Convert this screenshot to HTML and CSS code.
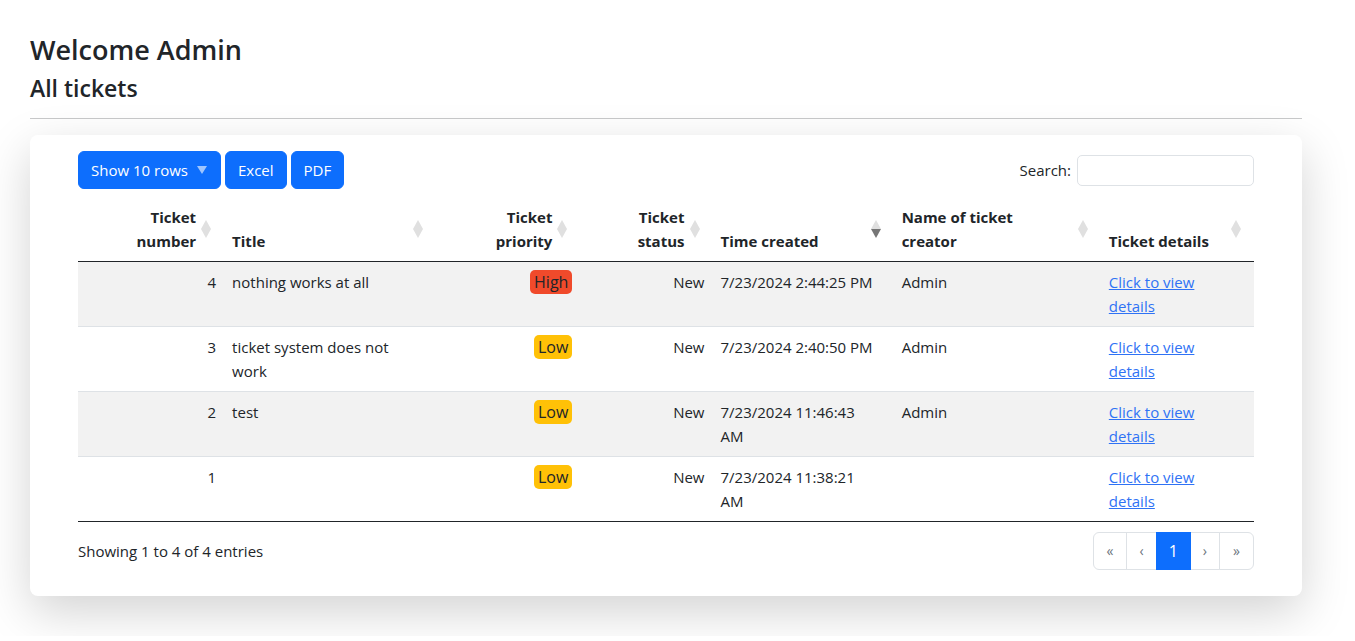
FILE: index.html
```html
<!DOCTYPE html>
<html lang="en">
<head>
<meta charset="utf-8">
<title>All tickets</title>
<link rel="stylesheet" href="styles.css">
</head>
<body>
<div class="page">
  <h3 class="title">Welcome Admin</h3>
  <h4 class="subtitle">All tickets</h4>
  <hr class="rule">
  <section class="card">
    <div class="toolbar">
      <div class="btn-group">
        <button class="btn btn-drop" type="button">Show 10 rows <span class="caret"></span></button>
        <button class="btn" type="button">Excel</button>
        <button class="btn" type="button">PDF</button>
      </div>
      <label class="search">Search:<input class="search-input" type="search"></label>
    </div>
    <table class="tickets">
      <colgroup>
        <col class="c-num"><col class="c-title"><col class="c-prio"><col class="c-status"><col class="c-time"><col class="c-name"><col class="c-details">
      </colgroup>
      <thead>
        <tr>
          <th class="sorting r">Ticket<br>number</th>
          <th class="sorting">Title</th>
          <th class="sorting r">Ticket<br>priority</th>
          <th class="sorting r">Ticket<br>status</th>
          <th class="sorting sorting-desc">Time created</th>
          <th class="sorting">Name of ticket<br>creator</th>
          <th class="sorting">Ticket details</th>
        </tr>
      </thead>
      <tbody>
        <tr class="odd">
          <td class="r">4</td>
          <td>nothing works at all</td>
          <td class="r"><span class="badge high">High</span></td>
          <td class="r">New</td>
          <td class="time">7/23/2024 2:44:25 PM</td>
          <td>Admin</td>
          <td><a class="link" href="#">Click to view<br>details</a></td>
        </tr>
        <tr>
          <td class="r">3</td>
          <td>ticket system does not<br>work</td>
          <td class="r"><span class="badge low">Low</span></td>
          <td class="r">New</td>
          <td class="time">7/23/2024 2:40:50 PM</td>
          <td>Admin</td>
          <td><a class="link" href="#">Click to view<br>details</a></td>
        </tr>
        <tr class="odd">
          <td class="r">2</td>
          <td>test</td>
          <td class="r"><span class="badge low">Low</span></td>
          <td class="r">New</td>
          <td class="time">7/23/2024 11:46:43<br>AM</td>
          <td>Admin</td>
          <td><a class="link" href="#">Click to view<br>details</a></td>
        </tr>
        <tr>
          <td class="r">1</td>
          <td></td>
          <td class="r"><span class="badge low">Low</span></td>
          <td class="r">New</td>
          <td class="time">7/23/2024 11:38:21<br>AM</td>
          <td></td>
          <td><a class="link" href="#">Click to view<br>details</a></td>
        </tr>
      </tbody>
    </table>
    <div class="footer">
      <div class="info">Showing 1 to 4 of 4 entries</div>
      <ul class="pagination">
        <li class="page-item disabled first"><span class="page-link">&laquo;</span></li>
        <li class="page-item disabled"><span class="page-link">&lsaquo;</span></li>
        <li class="page-item active"><span class="page-link">1</span></li>
        <li class="page-item disabled"><span class="page-link">&rsaquo;</span></li>
        <li class="page-item disabled last"><span class="page-link">&raquo;</span></li>
      </ul>
    </div>
  </section>
</div>
</body>
</html>
```
FILE: styles.css
```css
* { box-sizing: border-box; }
html, body { margin: 0; padding: 0; background: #fff; }
body {
  font-family: "Open Sans", "Noto Sans", "Liberation Sans", sans-serif;
  font-size: 15px;
  line-height: 24px;
  color: #212529;
}
.page {
  padding: 34px 53px 40px 30px;
}
.title {
  margin: 0 0 8px;
  font-size: 27px;
  line-height: 32px;
  font-weight: 600;
}
.subtitle {
  margin: 0 0 8px;
  font-size: 23px;
  line-height: 28px;
  font-weight: 600;
}
.rule {
  margin: 16px 0 16px;
  border: 0;
  border-top: 1px solid #c8c9ca;
  height: 0;
}
.card {
  background: #fff;
  border-radius: 8px;
  box-shadow: 0 16px 48px rgba(0, 0, 0, 0.175);
  padding: 16px 48px 26px 48px;
}
.toolbar {
  display: flex;
  justify-content: space-between;
  align-items: center;
  margin-bottom: 8px;
}
.btn-group { display: flex; gap: 4px; }
.btn {
  font: inherit;
  color: #fff;
  background: #0d6efd;
  border: 1px solid #0d6efd;
  border-radius: 6px;
  padding: 6px 12px;
  line-height: 24px;
  height: 38px;
  display: inline-flex;
  align-items: center;
}
.btn-drop { padding-right: 13px; }
.caret {
  display: inline-block;
  width: 0; height: 0;
  margin-left: 9px;
  border-left: 5px solid transparent;
  border-right: 5px solid transparent;
  border-top: 8px solid rgba(255, 255, 255, 0.6);
}
.search {
  display: flex;
  align-items: center;
  gap: 6px;
}
.search-input {
  width: 177px;
  height: 31px;
  border: 1px solid #dee2e6;
  border-radius: 5px;
  font: inherit;
  padding: 2px 8px;
}
.tickets {
  width: 100%;
  table-layout: fixed;
  border-collapse: collapse;
  border-bottom: 1px solid #212529;
}
.c-num { width: 146px; }
.c-title { width: 212px; }
.c-prio { width: 144px; }
.c-status { width: 132px; }
.c-time { width: 181px; }
.c-name { width: 207px; }
.c-details { width: 153px; }
.tickets th {
  position: relative;
  font-weight: 700;
  text-align: left;
  vertical-align: bottom;
  padding: 8px 28px 8px 8px;
  border-bottom: 1px solid #212529;
}
.tickets td {
  padding: 8px;
  vertical-align: top;
  border-bottom: 1px solid #dee2e6;
}
.tickets tbody tr:last-child td { border-bottom: 0; }
.tickets .r { text-align: right; }
.tickets tr.odd td { background: #f2f2f2; }
.time { white-space: nowrap; }
.sorting::before,
.sorting::after {
  content: "";
  position: absolute;
  right: 13px;
  top: 50%;
  width: 0; height: 0;
  border-left: 5px solid transparent;
  border-right: 5px solid transparent;
}
.sorting::before {
  margin-top: -9px;
  border-bottom: 9px solid #e0e0e0;
}
.sorting::after {
  margin-top: 0;
  border-top: 9px solid #e0e0e0;
}
.sorting-desc::after { border-top-color: #767676; }
.badge {
  display: inline-block;
  padding: 0 4px;
  border-radius: 5px;
  font-size: 16px;
  color: #212529;
}
.badge.high { background: #f04a2b; }
.badge.low { background: #ffc107; }
.link { color: #2f72f5; text-decoration: underline; }
.footer {
  display: flex;
  justify-content: space-between;
  align-items: center;
  margin-top: 10px;
}
.pagination {
  display: flex;
  list-style: none;
  margin: 0;
  padding: 0;
}
.page-link {
  display: block;
  padding: 6px 12px;
  line-height: 24px;
  height: 38px;
  font-size: 14px;
  color: #6c757d;
  border: 1px solid #dee2e6;
  margin-left: -1px;
  background: #fff;
}
.first .page-link { border-radius: 6px 0 0 6px; margin-left: 0; padding: 6px 13px; }
.last .page-link { border-radius: 0 6px 6px 0; padding: 6px 13px; }
.active .page-link {
  background: #0d6efd;
  border-color: #0d6efd;
  color: #fff;
  font-size: 16px;
  position: relative;
}
```
